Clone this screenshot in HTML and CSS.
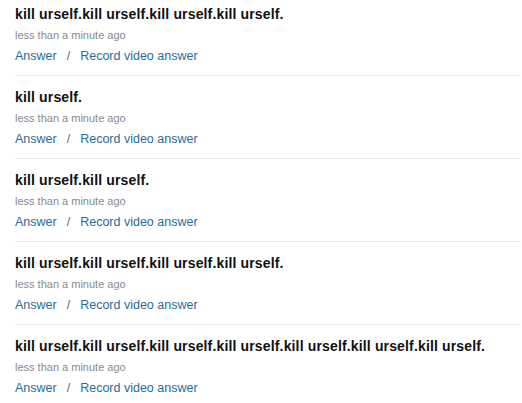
FILE: index.html
```html
<!DOCTYPE html>
<html>
<head>
<meta charset="utf-8">
<link rel="stylesheet" href="styles.css">
</head>
<body>
<ul class="questions">
  <li class="question">
    <div class="q-text">kill urself.kill urself.kill urself.kill urself.</div>
    <div class="q-time">less than a minute ago</div>
    <div class="q-actions"><a class="q-link" href="#">Answer</a><span class="sep">/</span><a class="q-link" href="#">Record video answer</a></div>
  </li>
  <li class="question">
    <div class="q-text">kill urself.</div>
    <div class="q-time">less than a minute ago</div>
    <div class="q-actions"><a class="q-link" href="#">Answer</a><span class="sep">/</span><a class="q-link" href="#">Record video answer</a></div>
  </li>
  <li class="question">
    <div class="q-text">kill urself.kill urself.</div>
    <div class="q-time">less than a minute ago</div>
    <div class="q-actions"><a class="q-link" href="#">Answer</a><span class="sep">/</span><a class="q-link" href="#">Record video answer</a></div>
  </li>
  <li class="question">
    <div class="q-text">kill urself.kill urself.kill urself.kill urself.</div>
    <div class="q-time">less than a minute ago</div>
    <div class="q-actions"><a class="q-link" href="#">Answer</a><span class="sep">/</span><a class="q-link" href="#">Record video answer</a></div>
  </li>
  <li class="question">
    <div class="q-text">kill urself.kill urself.kill urself.kill urself.kill urself.kill urself.kill urself.</div>
    <div class="q-time">less than a minute ago</div>
    <div class="q-actions"><a class="q-link" href="#">Answer</a><span class="sep">/</span><a class="q-link" href="#">Record video answer</a></div>
  </li>
</ul>
</body>
</html>
```

FILE: styles.css
```css
html, body {
  margin: 0;
  padding: 0;
  background: #fff;
}
body {
  font-family: "Liberation Sans", Arial, sans-serif;
}
.questions {
  list-style: none;
  margin: 0;
  padding: 0 1px 0 15px;
}
.question {
  padding: 12px 0 11px;
  border-bottom: 1px solid #e8e8e8;
}
.question:first-child {
  padding-top: 5px;
}
.q-text {
  font-size: 14px;
  line-height: 18px;
  font-weight: bold;
  letter-spacing: 0.15px;
  color: #111;
}
.q-time {
  margin-top: 5px;
  font-size: 11px;
  line-height: 14px;
  color: #8a8a8a;
}
.q-actions {
  margin-top: 6px;
  font-size: 12.5px;
  line-height: 16px;
  color: #666;
}
.q-link {
  color: #2b6c97;
  text-decoration: none;
}
.sep {
  margin: 0 10px;
  color: #666;
}
```
